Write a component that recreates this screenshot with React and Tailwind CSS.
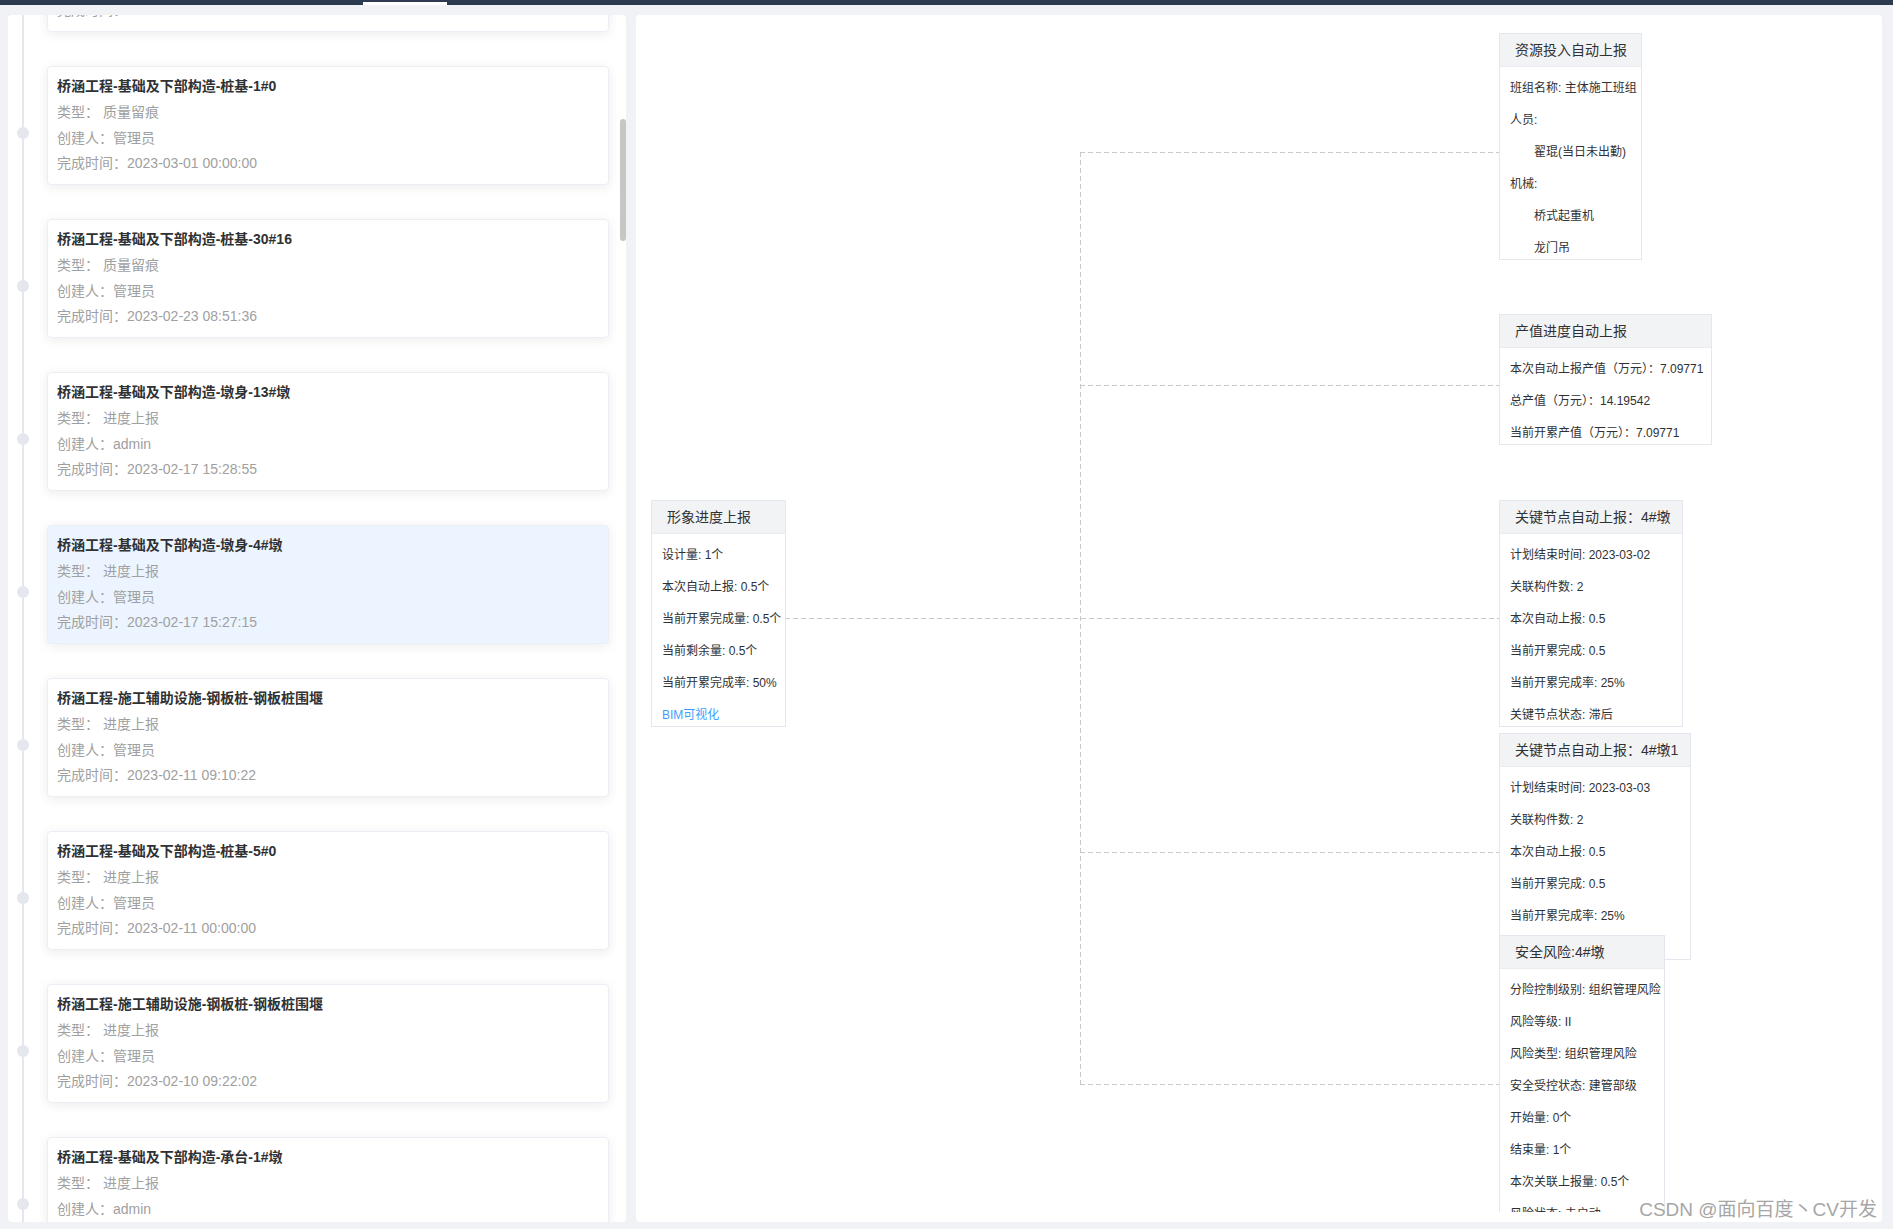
import React from "react";

const items = [
  { title: "桥涵工程-基础及下部构造-桩基-2#0", type: "质量留痕", user: "管理员", time: "2023-03-01 00:00:00" },
  { title: "桥涵工程-基础及下部构造-桩基-1#0", type: "质量留痕", user: "管理员", time: "2023-03-01 00:00:00" },
  { title: "桥涵工程-基础及下部构造-桩基-30#16", type: "质量留痕", user: "管理员", time: "2023-02-23 08:51:36" },
  { title: "桥涵工程-基础及下部构造-墩身-13#墩", type: "进度上报", user: "admin", time: "2023-02-17 15:28:55" },
  { title: "桥涵工程-基础及下部构造-墩身-4#墩", type: "进度上报", user: "管理员", time: "2023-02-17 15:27:15", active: true },
  { title: "桥涵工程-施工辅助设施-钢板桩-钢板桩围堰", type: "进度上报", user: "管理员", time: "2023-02-11 09:10:22" },
  { title: "桥涵工程-基础及下部构造-桩基-5#0", type: "进度上报", user: "管理员", time: "2023-02-11 00:00:00" },
  { title: "桥涵工程-施工辅助设施-钢板桩-钢板桩围堰", type: "进度上报", user: "管理员", time: "2023-02-10 09:22:02" },
  { title: "桥涵工程-基础及下部构造-承台-1#墩", type: "进度上报", user: "admin", time: "2023-02-09 10:16:40" },
];

function Card({ it }) {
  return (
    <div
      className={
        "relative h-[119px] rounded-[4px] border border-[#ebeef5] shadow-[0_2px_12px_0_rgba(0,0,0,0.08)] pt-[8px] px-[9px] " +
        (it.active ? "bg-[#ecf5ff]" : "bg-white")
      }
    >
      <span className="absolute left-[-31px] top-[60px] w-[12px] h-[12px] rounded-full bg-[#e4e7ed]" />
      <div className="h-[22px] leading-[22px] text-[14px] font-bold text-[#303133] whitespace-nowrap">{it.title}</div>
      <div className="mt-[3px] text-[14px] leading-[25.5px] text-[#a0a0a0] whitespace-nowrap">
        <div>类型： {it.type}</div>
        <div>创建人：{it.user}</div>
        <div>完成时间：{it.time}</div>
      </div>
    </div>
  );
}

function Row({ children, indent, link }) {
  return (
    <div
      className={
        "h-[32px] pt-[11px] leading-[20px] pr-[8px] text-[12px] whitespace-nowrap " +
        (indent ? "pl-[34px] " : "pl-[10px] ") +
        (link ? "text-[#409eff]" : "text-[#303133]")
      }
    >
      {children}
    </div>
  );
}

function NodeBox({ pos, title, children }) {
  return (
    <div className={"absolute bg-white border border-[#e4e7ed] " + pos}>
      <div className="h-[33px] bg-[#f2f3f5] border-b border-[#e9ebf0] pl-[15px] pr-[10px] flex items-center text-[14px] text-[#303133] whitespace-nowrap">
        {title}
      </div>
      <div>{children}</div>
    </div>
  );
}

export default function App() {
  return (
    <div className="relative w-[1893px] h-[1229px] overflow-hidden bg-[#f1f2f6] font-['Liberation_Sans','Noto_Sans_CJK_SC',sans-serif]">
      {/* top bar */}
      <div className="h-[5px] bg-[#2d3b51] flex items-end">
        <div className="ml-[363px] w-[84px] h-[3px] bg-white" />
      </div>

      <div className="flex gap-[10px] pt-[10px] pl-[8px] pr-[11px] pb-[7px] h-[1224px]">
        {/* left panel */}
        <div className="relative w-[618px] h-full bg-white rounded-[4px] overflow-hidden">
          <div className="-mt-[102px] ml-[14px] border-l-2 border-[#e4e7ed] pl-[23px] pr-[17px] flex flex-col gap-[34px] pb-[40px]">
            {items.map((it, i) => (
              <Card key={i} it={it} />
            ))}
          </div>
          <div className="absolute right-0 top-[104px] w-[6px] h-[122px] rounded-full bg-[#c6c6c6]" />
        </div>

        {/* right panel */}
        <div className="flex-1 h-full bg-white rounded-[4px] pb-[10px]">
          <div className="relative h-full overflow-hidden">
            <svg className="absolute left-0 top-0" width="1246" height="1200" fill="none">
              <g stroke="#c8c9cc" strokeWidth="1" strokeDasharray="5 3" shapeRendering="crispEdges">
                <line x1="149" y1="603.5" x2="863" y2="603.5" />
                <line x1="444.5" y1="137" x2="444.5" y2="1069" />
                <line x1="444" y1="137.5" x2="863" y2="137.5" />
                <line x1="444" y1="370.5" x2="863" y2="370.5" />
                <line x1="444" y1="837.5" x2="863" y2="837.5" />
                <line x1="444" y1="1069.5" x2="863" y2="1069.5" />
              </g>
            </svg>

            <NodeBox pos="left-[15px] top-[485px] w-[135px]" title="形象进度上报">
              <Row>设计量: 1个</Row>
              <Row>本次自动上报: 0.5个</Row>
              <Row>当前开累完成量: 0.5个</Row>
              <Row>当前剩余量: 0.5个</Row>
              <Row>当前开累完成率: 50%</Row>
              <Row link>BIM可视化</Row>
            </NodeBox>

            <NodeBox pos="left-[863px] top-[18px] w-[143px]" title="资源投入自动上报">
              <Row>班组名称: 主体施工班组</Row>
              <Row>人员:</Row>
              <Row indent>翟琨(当日未出勤)</Row>
              <Row>机械:</Row>
              <Row indent>桥式起重机</Row>
              <Row indent>龙门吊</Row>
            </NodeBox>

            <NodeBox pos="left-[863px] top-[299px] w-[213px]" title="产值进度自动上报">
              <Row>本次自动上报产值（万元）：7.09771</Row>
              <Row>总产值（万元）：14.19542</Row>
              <Row>当前开累产值（万元）：7.09771</Row>
            </NodeBox>

            <NodeBox pos="left-[863px] top-[485px] w-[184px]" title="关键节点自动上报：4#墩">
              <Row>计划结束时间: 2023-03-02</Row>
              <Row>关联构件数: 2</Row>
              <Row>本次自动上报: 0.5</Row>
              <Row>当前开累完成: 0.5</Row>
              <Row>当前开累完成率: 25%</Row>
              <Row>关键节点状态: 滞后</Row>
            </NodeBox>

            <NodeBox pos="left-[863px] top-[718px] w-[192px]" title="关键节点自动上报：4#墩1">
              <Row>计划结束时间: 2023-03-03</Row>
              <Row>关联构件数: 2</Row>
              <Row>本次自动上报: 0.5</Row>
              <Row>当前开累完成: 0.5</Row>
              <Row>当前开累完成率: 25%</Row>
              <div className="h-[32px]" />
            </NodeBox>

            <NodeBox pos="left-[863px] top-[920px] w-[166px]" title="安全风险:4#墩">
              <Row>分险控制级别: 组织管理风险</Row>
              <Row>风险等级: II</Row>
              <Row>风险类型: 组织管理风险</Row>
              <Row>安全受控状态: 建管部级</Row>
              <Row>开始量: 0个</Row>
              <Row>结束量: 1个</Row>
              <Row>本次关联上报量: 0.5个</Row>
              <Row>风险状态: 未启动</Row>
            </NodeBox>
          </div>
        </div>
      </div>

      <div className="absolute right-[16px] bottom-[5px] text-[19px] leading-[28px] text-[#a6a6a6] whitespace-nowrap">
        CSDN @面向百度丶CV开发
      </div>
    </div>
  );
}
